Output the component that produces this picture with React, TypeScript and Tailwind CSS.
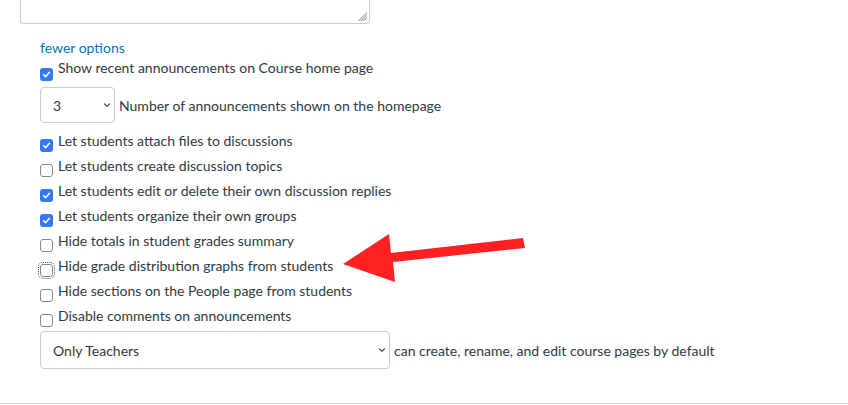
import React from 'react';

const rows = [
  { label: 'Let students attach files to discussions', checked: true },
  { label: 'Let students create discussion topics', checked: false },
  { label: 'Let students edit or delete their own discussion replies', checked: true },
  { label: 'Let students organize their own groups', checked: true },
  { label: 'Hide totals in student grades summary', checked: false },
  { label: 'Hide grade distribution graphs from students', checked: false, focused: true },
  { label: 'Hide sections on the People page from students', checked: false },
  { label: 'Disable comments on announcements', checked: false },
];

function Checkbox({ checked, focused }: { checked: boolean; focused?: boolean }) {
  return (
    <span
      className={`mt-[11px] flex h-[13px] w-[13px] shrink-0 items-center justify-center rounded-[3px] ${
        checked ? 'bg-[#3478f6]' : 'border-[1.5px] border-[#85858c] bg-white'
      } ${focused ? 'outline-1 outline-dotted outline-offset-1 outline-[#555]' : ''}`}
    >
      {checked && (
        <svg width="9" height="9" viewBox="0 0 10 10">
          <path d="M1.8 5.2 L4 7.4 L8.3 2.6" fill="none" stroke="white" strokeWidth="1.7" strokeLinecap="round" strokeLinejoin="round" />
        </svg>
      )}
    </span>
  );
}

function Chevron() {
  return (
    <svg width="8" height="6" viewBox="0 0 8 6" className="shrink-0">
      <path d="M1.5 1.8 L4 4.3 L6.5 1.8" fill="none" stroke="#333" strokeWidth="1.1" strokeLinecap="round" />
    </svg>
  );
}

export default function App() {
  return (
    <div
      className="relative h-[405px] w-[848px] overflow-hidden bg-white text-[14px] text-[#2d3b45]"
      style={{ fontFamily: 'Lato, "Liberation Sans", sans-serif' }}
    >
      {/* textarea bottom edge */}
      <div className="relative ml-[20px] h-[24px] w-[350px] rounded-b-[4px] border border-t-0 border-[#c7cdd1]">
        <svg width="12" height="12" viewBox="0 0 12 12" className="absolute bottom-[1px] right-[1px]">
          <path d="M11 2 L2 11 M11 5 L5 11 M11 8 L8 11 M11 3.5 L3.5 11 M11 6.5 L6.5 11" stroke="#9a9a9a" strokeWidth="0.8" />
        </svg>
      </div>

      <div className="pl-[40px]">
        <div className="mt-[14px] leading-[20px] text-[#0374b5]">fewer options</div>

        <div className="flex items-start gap-[5px]">
          <span className="mt-[10px] flex h-[13px] w-[13px] shrink-0 items-center justify-center rounded-[3px] bg-[#3478f6]">
            <svg width="9" height="9" viewBox="0 0 10 10">
              <path d="M1.8 5.2 L4 7.4 L8.3 2.6" fill="none" stroke="white" strokeWidth="1.7" strokeLinecap="round" strokeLinejoin="round" />
            </svg>
          </span>
          <span className="leading-[20px]">Show recent announcements on Course home page</span>
        </div>

        <div className="mt-[6px] flex items-center gap-[4px]">
          <div className="flex h-[36px] w-[75px] items-center justify-between rounded-[4px] border border-[#c7cdd1] pl-[12px] pr-[3px]">
            <span>3</span>
            <Chevron />
          </div>
          <span>Number of announcements shown on the homepage</span>
        </div>

        <div className="mt-[5px]">
          {rows.map((r) => (
            <div key={r.label} className="flex h-[25px] items-start gap-[5px]">
              <Checkbox checked={r.checked} focused={r.focused} />
              <span className="leading-[25px]">{r.label}</span>
            </div>
          ))}
        </div>

        <div className="mt-[3px] flex items-center gap-[4px]">
          <div className="flex h-[38px] w-[350px] items-center justify-between rounded-[4px] border border-[#c7cdd1] pl-[12px] pr-[3px]">
            <span>Only Teachers</span>
            <Chevron />
          </div>
          <span>can create, rename, and edit course pages by default</span>
        </div>
      </div>

      <div className="mt-[34px] h-px w-full bg-[#dcdcdc]" />

      {/* annotation arrow */}
      <svg width="848" height="405" className="pointer-events-none absolute left-0 top-0">
        <polygon points="343,264 389,234 391,253 523,238 525,248 393,262 395,282" fill="#ff2121" />
      </svg>
    </div>
  );
}
